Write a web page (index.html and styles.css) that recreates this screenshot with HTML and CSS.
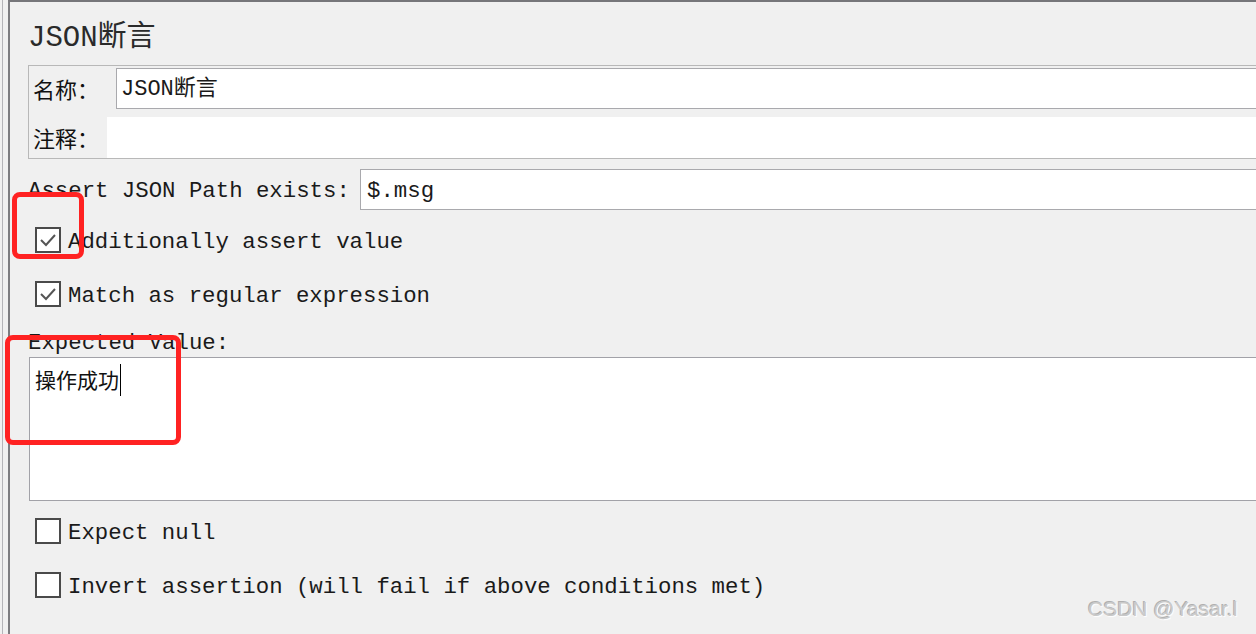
FILE: index.html
```html
<!DOCTYPE html>
<html lang="zh">
<head>
<meta charset="utf-8">
<title>JSON断言</title>
<link rel="stylesheet" href="styles.css">
</head>
<body>
<div class="outer">
  <div class="panel">
    <div class="title">JSON断言</div>
    <div class="namebox">
      <div class="row">
        <span class="lbl lbl-name">名称：</span>
        <div class="field bordered">JSON断言</div>
      </div>
      <div class="row row2">
        <span class="lbl lbl-comment">注释：</span>
        <div class="field plain"></div>
      </div>
    </div>
    <div class="assert-row">
      <span class="mono assert-lbl">Assert JSON Path exists:</span>
      <div class="field bordered mono">$.msg</div>
    </div>
    <div class="cb-row">
      <span class="cb"><svg width="22" height="22" viewBox="0 0 22 22"><polyline points="4,11 9,16 18,6" fill="none" stroke="#555" stroke-width="2"/></svg></span>
      <span class="mono cb-text">Additionally assert value</span>
    </div>
    <div class="cb-row">
      <span class="cb"><svg width="22" height="22" viewBox="0 0 22 22"><polyline points="4,11 9,16 18,6" fill="none" stroke="#555" stroke-width="2"/></svg></span>
      <span class="mono cb-text">Match as regular expression</span>
    </div>
    <div class="mono exp-lbl">Expected Value:</div>
    <div class="textarea"><span class="cjk">操作成功</span><span class="caret"></span></div>
    <div class="cb-row cb-row-low">
      <span class="cb"></span>
      <span class="mono cb-text">Expect null</span>
    </div>
    <div class="cb-row">
      <span class="cb"></span>
      <span class="mono cb-text">Invert assertion (will fail if above conditions met)</span>
    </div>
  </div>
</div>
<div class="mark mark1"></div>
<div class="mark mark2"></div>
<div class="watermark">CSDN @Yasar.l</div>
</body>
</html>
```
FILE: styles.css
```css
html, body {
  margin: 0;
  padding: 0;
  width: 1256px;
  height: 634px;
  overflow: hidden;
  background: #f0f0f0;
  font-family: "Liberation Mono", "Noto Sans CJK SC", monospace;
  color: #1a1a1a;
}

.outer {
  width: 1300px;
  height: 634px;
  margin-left: 2px;
  border-left: 1px solid #b4b4b8;
  padding-left: 5px;
}

.panel {
  height: 632px;
  border-left: 2px solid #7c7c80;
  border-top: 2px solid #76767a;
  padding-left: 18px;
}

.title {
  margin-top: 20px;
  height: 32px;
  line-height: 34px;
  font-size: 29px;
  color: #2a2a2a;
}

.namebox {
  margin-top: 11px;
  border: 1px solid #b8b8b8;
  border-right: none;
  padding: 2px 0 0 4px;
  height: 90px;
}

.row {
  display: flex;
  height: 41px;
  align-items: stretch;
}

.row2 {
  margin-top: 8px;
}

.lbl {
  font-family: "Noto Sans CJK SC", sans-serif;
  font-size: 22px;
  line-height: 41px;
  color: #111;
}

.lbl-name { width: 83px; flex: none; }
.lbl-comment { width: 74px; flex: none; }

.field {
  flex: 1;
  background: #fff;
  font-size: 22px;
  line-height: 41px;
  padding-left: 4px;
  box-sizing: border-box;
}

.bordered {
  border: 1px solid #a9a9ad;
  border-right: none;
}

.plain {
  border: none;
}

.assert-row {
  margin-top: 10px;
  display: flex;
  height: 41px;
  align-items: stretch;
}

.mono {
  font-family: "Liberation Mono", "Noto Sans CJK SC", monospace;
  font-size: 22.35px;
}

.assert-lbl {
  line-height: 45px;
  width: 332px;
  flex: none;
}

.assert-row .field {
  padding-left: 6px;
  line-height: 42px;
}

.cb-row {
  display: flex;
  align-items: center;
  height: 54px;
  padding-left: 7px;
  gap: 7px;
}

.cb-text {
  padding-top: 3px;
}

.assert-row + .cb-row {
  margin-top: 3px;
}

.cb-row-low {
  margin-top: 3px;
}

.cb {
  width: 26px;
  height: 26px;
  box-sizing: border-box;
  border: 2px solid #4a4a4a;
  background: #fff;
  display: flex;
  align-items: center;
  justify-content: center;
  flex: none;
}

.exp-lbl {
  margin-top: 8px;
  line-height: 28px;
  height: 24px;
}

.textarea {
  margin-top: 4px;
  margin-left: 1px;
  height: 144px;
  box-sizing: border-box;
  border: 1px solid #a2a2a8;
  border-right: none;
  background: #fff;
  padding: 6px 0 0 5px;
  display: flex;
  align-items: flex-start;
}

.cjk {
  font-family: "Noto Sans CJK SC", sans-serif;
  font-size: 21px;
  line-height: 30px;
  color: #111;
}

.caret {
  display: inline-block;
  width: 1px;
  height: 32px;
  background: #000;
  margin-left: 1px;
}

.mark {
  position: absolute;
  border: 5px solid #ff2222;
  border-radius: 8px;
  box-sizing: border-box;
}

.mark1 {
  left: 12px;
  top: 192px;
  width: 72px;
  height: 67px;
}

.mark2 {
  left: 5px;
  top: 335px;
  width: 176px;
  height: 110px;
}

.watermark {
  position: absolute;
  left: 1088px;
  top: 597px;
  font-family: "Liberation Sans", Arial, sans-serif;
  font-size: 21px;
  color: #c9c9c9;
  text-shadow: 1px 1px 1px #ffffff, -1px -1px 0 #b0b0b0;
  white-space: nowrap;
}
```
